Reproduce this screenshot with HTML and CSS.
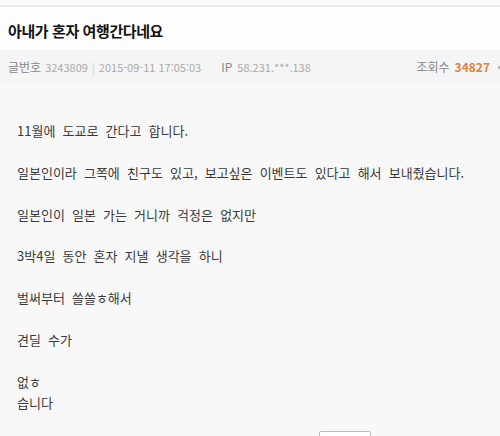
FILE: index.html
```html
<!DOCTYPE html>
<html lang="ko">
<head>
<meta charset="utf-8">
<link rel="stylesheet" href="styles.css">
</head>
<body>
<div class="topbar"></div>
<div class="head">
  <h1 class="title">아내가 혼자 여행간다네요</h1>
</div>
<div class="meta">
  <div class="meta-left">
    <span class="label">글번호</span> <span class="num">3243809</span> <span class="sep">|</span> <span class="num">2015-09-11 17:05:03</span>
    <span class="ip"><span class="label">IP</span> <span class="num">58.231.***.138</span></span>
  </div>
  <div class="meta-right">
    <span class="label">조회수</span> <span class="views">34827</span><span class="dot"></span>
  </div>
</div>
<div class="content">
  <p>11월에 도교로 간다고 합니다.</p>
  <p>일본인이라 그쪽에 친구도 있고, 보고싶은 이벤트도 있다고 해서 보내줬습니다.</p>
  <p>일본인이 일본 가는 거니까 걱정은 없지만</p>
  <p>3박4일 동안 혼자 지낼 생각을 하니</p>
  <p>벌써부터 쓸쓸ㅎ해서</p>
  <p>견딜 수가</p>
  <p>없ㅎ<br>습니다</p>
  <div class="actions"><span class="btn"></span></div>
</div>
</body>
</html>
```
FILE: styles.css
```css
html, body {
  margin: 0;
  padding: 0;
  background: #f8f8f8;
  font-family: "Noto Sans CJK KR", "Noto Sans", sans-serif;
  overflow: hidden;
}
.topbar {
  height: 5px;
  background: #fbfbfb;
  border-bottom: 2px solid #ebebeb;
}
.head {
  background: #fefefe;
  height: 43px;
  display: flex;
  align-items: center;
  padding-left: 8px;
}
.title {
  margin: 0;
  font-size: 15px;
  font-weight: bold;
  color: #111;
  letter-spacing: -0.4px;
  line-height: 20px;
  padding-top: 4px;
}
.meta {
  background: #f5f5f5;
  height: 34px;
  display: flex;
  justify-content: space-between;
  align-items: center;
  padding: 0 0 0 8px;
  font-size: 11px;
  white-space: nowrap;
  line-height: 14px;
}
.meta-left, .meta-right {
  display: flex;
  align-items: center;
  gap: 4px;
}
.label { color: #888; font-size: 12px; }
.num { color: #aaa; font-size: 11px; }
.sep { color: #ccc; }
.ip { margin-left: 16px; display: flex; gap: 5px; }
.views { color: #e0823d; font-weight: bold; font-size: 12px; }
.dot {
  width: 3px;
  height: 3px;
  border-radius: 50%;
  background: #aaa;
  margin-left: 3px;
}
.meta-right { margin-right: -1px; gap: 5px; }
.content {
  padding: 36px 0 0 17px;
  font-size: 13px;
  line-height: 21px;
  color: #3a3a3a;
  word-spacing: 3.5px;
}
.content p {
  margin: 0 0 20.8px 0;
}
.content p:last-of-type { margin-bottom: 0; }
.actions {
  padding-left: 302px;
  padding-top: 18px;
}
.btn {
  display: block;
  width: 50px;
  height: 20px;
  border: 1px solid #bbb;
  border-radius: 2px;
  background: #fff;
}
```
